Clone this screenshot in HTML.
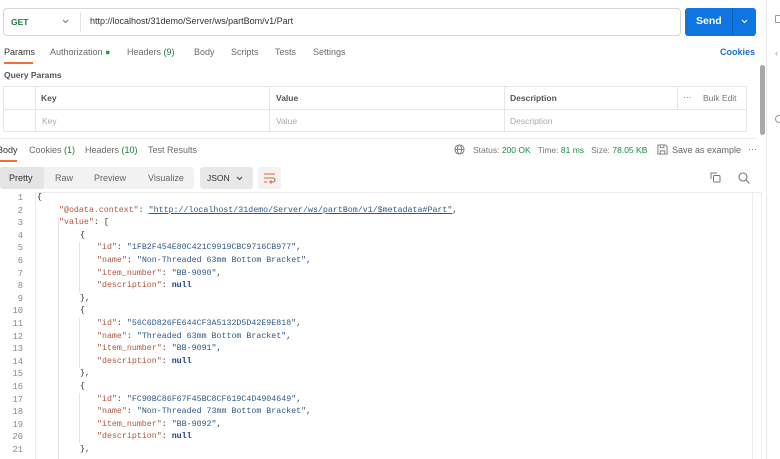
<!DOCTYPE html>
<html><head><meta charset="utf-8"><style>
*{margin:0;padding:0;box-sizing:border-box}
body{width:780px;height:459px;overflow:hidden;background:#fff;font-family:"Liberation Sans",sans-serif;position:relative;color:#212121}
.a{position:absolute;white-space:nowrap}
.t{font-size:9px;color:#6b6b6b}
.code{position:absolute;left:0;top:192px;width:752px;font-family:"Liberation Mono",monospace;font-size:8.3px;line-height:12.6px}
.ln{position:absolute;left:0;width:23px;text-align:right;color:#8a8a8a;font-size:8.8px}
.cl{position:absolute;left:37px;color:#333;white-space:pre}
.k{color:#b0553d}.s{color:#2f5a87}.n{color:#1f3d8c;font-weight:bold}
.u{color:#2f5a87;text-decoration:underline}
.g{position:absolute;width:1px;background:#e2e2e2}
</style></head><body>
<div class="a" style="left:3px;top:8px;width:678px;height:28px;border:1px solid #d6d6d6;border-radius:4px"></div>
<div class="a" style="left:11px;top:17px;font-size:8.5px;font-weight:bold;color:#1d7a3f">GET</div>
<svg class="a" style="left:62px;top:19px" width="7" height="5" viewBox="0 0 7 5" fill="none" stroke="#777" stroke-width="1"><path d="M1 1l2.5 2.5L6 1"/></svg>
<div class="a" style="left:80px;top:12px;width:1px;height:20px;background:#e3e3e3"></div>
<div class="a" style="left:90px;top:16px;font-size:9px;color:#333">http://localhost/31demo/Server/ws/partBom/v1/Part</div>
<div class="a" style="left:685px;top:8px;width:71px;height:28px;background:#0f75e0;border-radius:3px"></div>
<div class="a" style="left:696px;top:15px;font-size:10.5px;font-weight:bold;color:#fff">Send</div>
<div class="a" style="left:732px;top:8px;width:1px;height:28px;background:#0b62bd"></div>
<svg class="a" style="left:741px;top:19px" width="7" height="5" viewBox="0 0 7 5" fill="none" stroke="#fff" stroke-width="1"><path d="M1 1l2.5 2.5L6 1"/></svg>
<div class="a" style="left:766px;top:0;width:1px;height:459px;background:#e8e8e8"></div>
<div class="a" style="left:760px;top:65px;width:5px;height:70px;background:#a8a8a8;border-radius:3px"></div>
<div class="a" style="left:775px;top:15px;width:6px;height:8px;border:1px solid #999;border-radius:1px"></div>
<div class="a" style="left:775px;top:48px;font-size:9px;color:#999">&lsaquo;</div>
<div class="a" style="left:775px;top:115px;width:8px;height:8px;border:1px solid #999;border-radius:50%"></div>
<div class="a t" style="left:4px;top:47px;color:#333">Params</div>
<div class="a" style="left:4px;top:62px;width:29px;height:1.5px;background:#f06d3c"></div>
<div class="a t" style="left:50px;top:47px">Authorization <span style="color:#1aa54a">&#9679;</span></div>
<div class="a t" style="left:127px;top:47px">Headers <span style="color:#1d7a3f">(9)</span></div>
<div class="a t" style="left:194px;top:47px">Body</div>
<div class="a t" style="left:231px;top:47px">Scripts</div>
<div class="a t" style="left:275px;top:47px">Tests</div>
<div class="a t" style="left:313px;top:47px">Settings</div>
<div class="a" style="left:720px;top:47px;font-size:9px;font-weight:bold;color:#1a6fd6">Cookies</div>
<div class="a" style="left:4px;top:70px;font-size:8.5px;font-weight:bold;color:#555">Query Params</div>
<div class="a" style="left:3px;top:86px;width:744px;height:46px;border:1px solid #e6e6e6"></div>
<div class="a" style="left:3px;top:109px;width:744px;height:1px;background:#e6e6e6"></div>
<div class="a" style="left:35px;top:86px;width:1px;height:46px;background:#e6e6e6"></div>
<div class="a" style="left:269px;top:86px;width:1px;height:46px;background:#e6e6e6"></div>
<div class="a" style="left:504px;top:86px;width:1px;height:46px;background:#e6e6e6"></div>
<div class="a" style="left:677px;top:86px;width:1px;height:23px;background:#e6e6e6"></div>
<div class="a" style="left:41px;top:93px;font-size:8.5px;font-weight:bold;color:#555">Key</div>
<div class="a" style="left:276px;top:93px;font-size:8.5px;font-weight:bold;color:#555">Value</div>
<div class="a" style="left:510px;top:93px;font-size:8.5px;font-weight:bold;color:#555">Description</div>
<div class="a" style="left:683px;top:92px;font-size:8.5px;color:#666">&middot;&middot;&middot;</div>
<div class="a" style="left:703px;top:93px;font-size:8.5px;color:#777">Bulk Edit</div>
<div class="a" style="left:42px;top:116px;font-size:8.5px;color:#aaa">Key</div>
<div class="a" style="left:276px;top:116px;font-size:8.5px;color:#aaa">Value</div>
<div class="a" style="left:510px;top:116px;font-size:8.5px;color:#aaa">Description</div>
<div class="a" style="left:0;top:138px;width:756px;height:1px;background:#ececec"></div>
<div class="a t" style="left:-3px;top:145px;color:#333">Body</div>
<div class="a" style="left:0;top:160px;width:17px;height:1.5px;background:#f06d3c"></div>
<div class="a t" style="left:29px;top:145px">Cookies <span style="color:#1d7a3f">(1)</span></div>
<div class="a t" style="left:85px;top:145px">Headers <span style="color:#1d7a3f">(10)</span></div>
<div class="a t" style="left:148px;top:145px">Test Results</div>
<svg class="a" style="left:454px;top:144px" width="11" height="11" viewBox="0 0 12 12" fill="none" stroke="#777" stroke-width="1"><circle cx="6" cy="6" r="5"/><ellipse cx="6" cy="6" rx="2.2" ry="5"/><path d="M1 6h10"/></svg>
<div class="a" style="left:473px;top:145px;font-size:8.5px;color:#777">Status: <span style="color:#1d8a4a">200 OK</span>&nbsp;&nbsp; Time: <span style="color:#1d8a4a">81 ms</span>&nbsp;&nbsp; Size: <span style="color:#1d8a4a">78.05 KB</span></div>
<svg class="a" style="left:657px;top:144px" width="11" height="11" viewBox="0 0 12 12" fill="none" stroke="#777" stroke-width="1"><path d="M1 1h8l2 2v8H1z"/><path d="M3.5 1v3h4V1M3.5 11V7.5h5V11"/></svg>
<div class="a" style="left:672px;top:145px;font-size:9px;color:#666">Save as example</div>
<div class="a" style="left:748px;top:144px;font-size:9px;color:#666">&middot;&middot;&middot;</div>
<div class="a" style="left:0;top:167px;width:194px;height:22px;background:#f2f2f2;border-radius:3px"></div>
<div class="a" style="left:0;top:167px;width:44px;height:22px;background:#e4e4e4;border-radius:3px"></div>
<div class="a" style="left:9px;top:173px;font-size:9px;color:#333">Pretty</div>
<div class="a" style="left:55px;top:173px;font-size:9px;color:#666">Raw</div>
<div class="a" style="left:94px;top:173px;font-size:9px;color:#666">Preview</div>
<div class="a" style="left:148px;top:173px;font-size:9px;color:#666">Visualize</div>
<div class="a" style="left:200px;top:167px;width:53px;height:22px;background:#e8e8e8;border-radius:3px"></div>
<div class="a" style="left:207px;top:173px;font-size:8.5px;color:#333">JSON</div>
<svg class="a" style="left:236px;top:176px" width="7" height="5" viewBox="0 0 7 5" fill="none" stroke="#444" stroke-width="1.1"><path d="M1 1l2.5 2.5L6 1"/></svg>
<div class="a" style="left:258px;top:167px;width:23px;height:22px;background:#f2f2f2;border-radius:3px"></div>
<svg class="a" style="left:263px;top:172px" width="13" height="12" viewBox="0 0 13 12" fill="none" stroke="#e0633a" stroke-width="1.1"><path d="M1 2h11M1 6h9a2 2 0 010 4H7M8.5 8.5L7 10l1.5 1.5M1 10h3"/></svg>
<svg class="a" style="left:710px;top:172px" width="11" height="11" viewBox="0 0 11 11" fill="none" stroke="#777" stroke-width="1"><rect x="3.5" y="3.5" width="6.5" height="6.5" rx="1"/><path d="M1 7V1h6"/></svg>
<svg class="a" style="left:738px;top:172px" width="12" height="12" viewBox="0 0 12 12" fill="none" stroke="#777" stroke-width="1.1"><circle cx="5" cy="5" r="4"/><path d="M8 8l3.5 3.5"/></svg>
<div class="a" style="left:35px;top:192px;width:727px;height:1px;background:#ececec"></div>
<div class="a" style="left:35px;top:192px;width:1px;height:267px;background:#ececec"></div>
<div class="a" style="left:752px;top:192px;width:1px;height:267px;background:#ececec"></div>
<div class="a" style="left:761px;top:192px;width:1px;height:267px;background:#ececec"></div>
<div class="g" style="left:58px;top:217px;height:242px"></div>
<div class="g" style="left:79px;top:242px;height:50px"></div>
<div class="g" style="left:79px;top:318px;height:50px"></div>
<div class="g" style="left:79px;top:393px;height:50px"></div>
<div class="code">
<div class="ln" style="top:0">1</div><div class="ln" style="top:12.6px">2</div><div class="ln" style="top:25.2px">3</div><div class="ln" style="top:37.8px">4</div><div class="ln" style="top:50.4px">5</div><div class="ln" style="top:63px">6</div><div class="ln" style="top:75.6px">7</div><div class="ln" style="top:88.2px">8</div><div class="ln" style="top:100.8px">9</div><div class="ln" style="top:113.4px">10</div><div class="ln" style="top:126px">11</div><div class="ln" style="top:138.6px">12</div><div class="ln" style="top:151.2px">13</div><div class="ln" style="top:163.8px">14</div><div class="ln" style="top:176.4px">15</div><div class="ln" style="top:189px">16</div><div class="ln" style="top:201.6px">17</div><div class="ln" style="top:214.2px">18</div><div class="ln" style="top:226.8px">19</div><div class="ln" style="top:239.4px">20</div><div class="ln" style="top:252px">21</div>
<div class="cl" style="top:0">{</div>
<div class="cl" style="top:12.6px;left:59px"><span class="k">"@odata.context"</span>: <span class="u">"http://localhost/31demo/Server/ws/partBom/v1/$metadata#Part"</span>,</div>
<div class="cl" style="top:25.2px;left:59px"><span class="k">"value"</span>: [</div>
<div class="cl" style="top:37.8px;left:80px">{</div>
<div class="cl" style="top:50.4px;left:97px"><span class="k">"id"</span>: <span class="s">"1FB2F454E80C421C9919CBC9716CB977"</span>,</div>
<div class="cl" style="top:63px;left:97px"><span class="k">"name"</span>: <span class="s">"Non-Threaded 63mm Bottom Bracket"</span>,</div>
<div class="cl" style="top:75.6px;left:97px"><span class="k">"item_number"</span>: <span class="s">"BB-9090"</span>,</div>
<div class="cl" style="top:88.2px;left:97px"><span class="k">"description"</span>: <span class="n">null</span></div>
<div class="cl" style="top:100.8px;left:80px">},</div>
<div class="cl" style="top:113.4px;left:80px">{</div>
<div class="cl" style="top:126px;left:97px"><span class="k">"id"</span>: <span class="s">"56C6D826FE644CF3A5132D5D42E9E818"</span>,</div>
<div class="cl" style="top:138.6px;left:97px"><span class="k">"name"</span>: <span class="s">"Threaded 63mm Bottom Bracket"</span>,</div>
<div class="cl" style="top:151.2px;left:97px"><span class="k">"item_number"</span>: <span class="s">"BB-9091"</span>,</div>
<div class="cl" style="top:163.8px;left:97px"><span class="k">"description"</span>: <span class="n">null</span></div>
<div class="cl" style="top:176.4px;left:80px">},</div>
<div class="cl" style="top:189px;left:80px">{</div>
<div class="cl" style="top:201.6px;left:97px"><span class="k">"id"</span>: <span class="s">"FC90BC86F67F45BC8CF619C4D4904649"</span>,</div>
<div class="cl" style="top:214.2px;left:97px"><span class="k">"name"</span>: <span class="s">"Non-Threaded 73mm Bottom Bracket"</span>,</div>
<div class="cl" style="top:226.8px;left:97px"><span class="k">"item_number"</span>: <span class="s">"BB-9092"</span>,</div>
<div class="cl" style="top:239.4px;left:97px"><span class="k">"description"</span>: <span class="n">null</span></div>
<div class="cl" style="top:252px;left:80px">},</div>
</div>
</body></html>
